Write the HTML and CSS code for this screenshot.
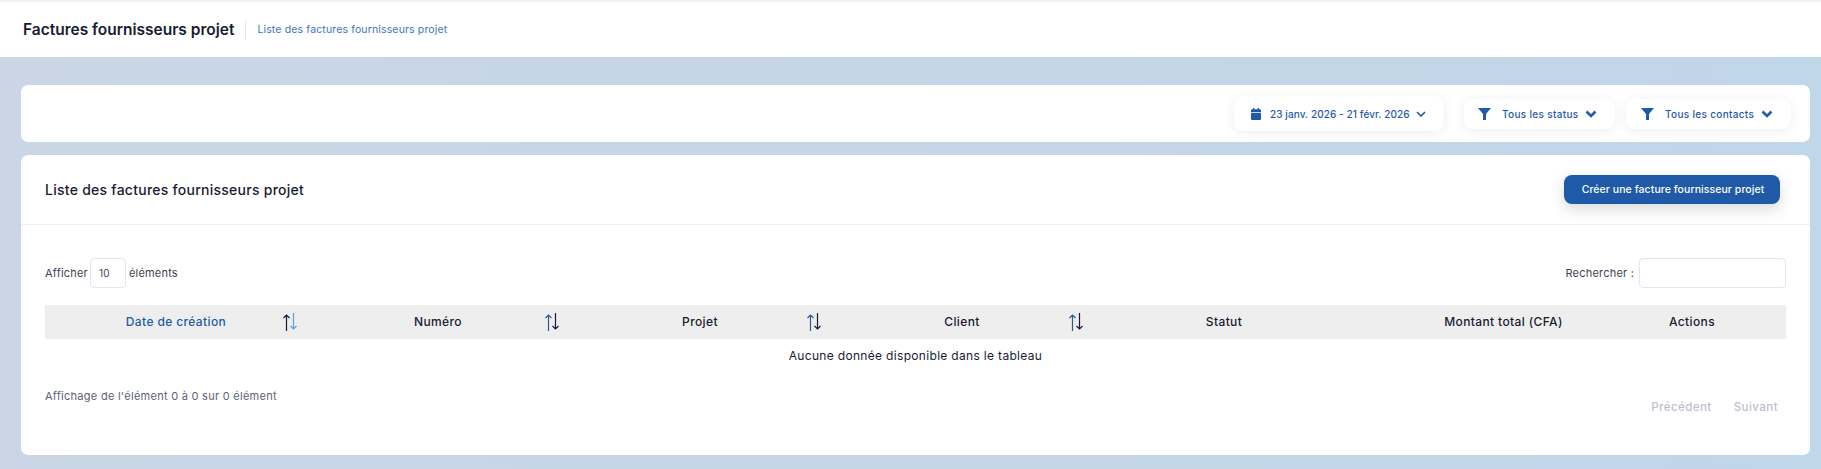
FILE: index.html
```html
<!DOCTYPE html>
<html lang="fr">
<head>
<meta charset="utf-8">
<title>Factures fournisseurs projet</title>
<link rel="stylesheet" href="styles.css">
</head>
<body>
<header class="topbar">
  <h1 class="page-title">Factures fournisseurs projet</h1>
  <span class="page-sub">Liste des factures fournisseurs projet</span>
</header>
<main class="content">
  <section class="card filters">
    <button class="pill pill-date">
      <svg class="ic-cal" viewBox="0 0 10 12"><path d="M2 0h1.3v1.3h3.4V0H8v1.3h1a1 1 0 0 1 1 1V4H0V2.3a1 1 0 0 1 1-1h1zM0 4.8h10V11a1 1 0 0 1-1 1H1a1 1 0 0 1-1-1z"/></svg>
      <span class="pill-label">23 janv. 2026 - 21 févr. 2026</span>
      <svg class="ic-chev-thin" viewBox="0 0 10 6"><path d="M1 1l4 4 4-4"/></svg>
    </button>
    <button class="pill pill-status">
      <svg class="ic-funnel" viewBox="0 0 13 12"><path d="M0 0h13L8 6v6H5V6z"/></svg>
      <span class="pill-label">Tous les status</span>
      <svg class="ic-chev" viewBox="0 0 12 8"><path d="M1.5 1.5l4.5 4.5 4.5-4.5"/></svg>
    </button>
    <button class="pill pill-contacts">
      <svg class="ic-funnel" viewBox="0 0 13 12"><path d="M0 0h13L8 6v6H5V6z"/></svg>
      <span class="pill-label">Tous les contacts</span>
      <svg class="ic-chev" viewBox="0 0 12 8"><path d="M1.5 1.5l4.5 4.5 4.5-4.5"/></svg>
    </button>
  </section>
  <section class="card list">
    <div class="list-head">
      <h2 class="list-title">Liste des factures fournisseurs projet</h2>
      <button class="btn-create">Créer une facture fournisseur projet</button>
    </div>
    <div class="list-body">
      <div class="tools">
        <label class="tool-length">Afficher <span class="length-box">10</span> éléments</label>
        <label class="tool-search">Rechercher : <input class="search-box" type="text"></label>
      </div>
      <table class="grid">
        <colgroup>
          <col class="c-std"><col class="c-std"><col class="c-std"><col class="c-std"><col class="c-std"><col class="c-amount"><col class="c-actions">
        </colgroup>
        <thead>
          <tr>
            <th class="sortable active"><span>Date de création</span>
              <svg class="sort" viewBox="0 0 16 18"><path class="up dark" d="M4.5 18V2M1.5 5l3-3 3 3"/><path class="down light" d="M11.5 0v16M8.5 13l3 3 3-3"/></svg></th>
            <th class="sortable"><span>Numéro</span>
              <svg class="sort" viewBox="0 0 16 18"><path class="up mid" d="M4.5 18V2M1.5 5l3-3 3 3"/><path class="down dark" d="M11.5 0v16M8.5 13l3 3 3-3"/></svg></th>
            <th class="sortable"><span>Projet</span>
              <svg class="sort" viewBox="0 0 16 18"><path class="up mid" d="M4.5 18V2M1.5 5l3-3 3 3"/><path class="down dark" d="M11.5 0v16M8.5 13l3 3 3-3"/></svg></th>
            <th class="sortable"><span>Client</span>
              <svg class="sort" viewBox="0 0 16 18"><path class="up mid" d="M4.5 18V2M1.5 5l3-3 3 3"/><path class="down dark" d="M11.5 0v16M8.5 13l3 3 3-3"/></svg></th>
            <th>Statut</th>
            <th>Montant total (CFA)</th>
            <th class="th-actions">Actions</th>
          </tr>
        </thead>
        <tbody>
          <tr><td class="empty" colspan="7">Aucune donnée disponible dans le tableau</td></tr>
        </tbody>
      </table>
      <div class="foot">
        <p class="info">Affichage de l'élément 0 à 0 sur 0 élément</p>
        <nav class="pager"><span>Précédent</span><span>Suivant</span></nav>
      </div>
    </div>
  </section>
</main>
</body>
</html>
```
FILE: styles.css
```css
* { box-sizing: border-box; }
html, body { margin: 0; height: 469px; overflow: hidden; }
body {
  font-family: Inter, "Noto Sans", sans-serif;
  color: #181c32;
  background: linear-gradient(90deg, #cad6e6, #c0d6e9);
  display: flex;
  flex-direction: column;
}
.topbar {
  height: 57px;
  flex: none;
  background: #fff;
  border-top: 2px solid #f1f2f6;
  display: flex;
  align-items: center;
  padding: 0 0 0 23px;
}
.page-title {
  margin: 0;
  font-size: 15.5px;
  font-weight: 600;
  line-height: 20px;
  color: #181c32;
}
.page-sub {
  margin-left: 11px;
  padding-left: 11px;
  border-left: 1px solid #e4e6ef;
  height: 20px;
  line-height: 20px;
  font-size: 10.5px;
  letter-spacing: .14px;
  color: #3f74bd;
}
.content {
  flex: 1;
  padding: 28px 11px 0 21px;
  display: flex;
  flex-direction: column;
  gap: 13px;
}
.card { background: #fff; border-radius: 7px; }
.filters {
  height: 57px;
  display: flex;
  align-items: center;
  justify-content: flex-end;
  padding-right: 19px;
}
.pill {
  border: 0;
  background: #fff;
  border-radius: 9px;
  box-shadow: 0 2px 12px rgba(60, 70, 90, .09);
  display: flex;
  align-items: center;
  font: 500 10px Inter, "Noto Sans", sans-serif;
  color: #1f5aa8;
  padding: 0;
}
.pill-date { width: 210px; height: 35px; padding-left: 17px; margin-right: 20px; letter-spacing: .09px; }
.pill-status { width: 151px; height: 30px; padding-left: 14px; margin-right: 11px; letter-spacing: .32px; }
.pill-contacts { width: 165px; height: 30px; padding-left: 15px; letter-spacing: .32px; }
.ic-cal { width: 10px; height: 12px; fill: #1f5aa8; flex: none; }
.ic-funnel { width: 13px; height: 12px; fill: #1f5aa8; flex: none; }
.ic-chev-thin { width: 10px; height: 6px; fill: none; stroke: #1f5aa8; stroke-width: 1.6; flex: none; margin-left: 6px; }
.ic-chev { width: 12px; height: 8px; fill: none; stroke: #1f5aa8; stroke-width: 2.6; flex: none; margin-left: 7px; }
.pill-date .pill-label { margin-left: 9px; }
.pill-status .pill-label, .pill-contacts .pill-label { margin-left: 11px; }
.list { height: 300px; }
.list-head {
  height: 70px;
  border-bottom: 1px solid #eff2f5;
  display: flex;
  align-items: center;
  justify-content: space-between;
  padding: 0 30px 0 24px;
}
.list-title { margin: 0; font-size: 14px; font-weight: 450; letter-spacing: .26px; color: #181c32; }
.btn-create {
  width: 216px;
  height: 29px;
  border: 0;
  border-radius: 8px;
  background: #1f5aa8;
  color: #fff;
  font: 500 10.5px Inter, "Noto Sans", sans-serif;
  letter-spacing: .07px;
  box-shadow: 0 5px 14px rgba(60, 70, 90, .2);
  padding: 0 0 0 2px;
}
.list-body { padding: 33px 24px 0; }
.tools {
  display: flex;
  justify-content: space-between;
  align-items: center;
  height: 30px;
  font-size: 11px;
  letter-spacing: .2px;
  color: #3f4254;
}
.tool-length, .tool-search { display: flex; align-items: center; }
.length-box {
  width: 36px;
  height: 30px;
  margin: 0 3px 0 2px;
  border: 1px solid #e4e6ef;
  border-radius: 4px;
  font-size: 10px;
  line-height: 28px;
  padding-left: 8px;
}
.search-box {
  width: 147px;
  height: 30px;
  margin-left: 5px;
  border: 1px solid #e4e6ef;
  border-radius: 4px;
  background: #fff;
}
.grid {
  width: 1741px;
  margin-top: 17px;
  border-collapse: collapse;
  table-layout: fixed;
}
.c-std { width: 262px; }
.c-amount { width: 297px; }
.c-actions { width: 134px; }
.grid thead tr { height: 34px; background: #eee; }
.grid th {
  position: relative;
  padding: 0 0 2px;
  font-size: 12px;
  font-weight: 450;
  letter-spacing: .38px;
  color: #181c32;
  text-align: center;
}
.th-actions { padding-right: 54px !important; }
.active > span { color: #1f5aa8; }
.sort {
  position: absolute;
  right: 9px;
  top: 8px;
  width: 16px;
  height: 18px;
  fill: none;
  stroke-width: 1.2;
}
.dark { stroke: #1c1c3a; }
.mid { stroke: #2b5a94; }
.light { stroke: #5aa3d8; }
.empty {
  height: 32px;
  padding: 0;
  text-align: center;
  font-size: 12px;
  letter-spacing: .32px;
  color: #181c32;
}
.foot {
  display: flex;
  justify-content: space-between;
  align-items: flex-start;
  padding-top: 17px;
}
.info { margin: 0; font-size: 11px; line-height: 16px; letter-spacing: .27px; color: #5e6278; }
.pager {
  display: flex;
  gap: 22px;
  padding: 11px 8px 0 0;
  font-size: 11.5px;
  line-height: 16px;
  font-weight: 500;
  letter-spacing: .45px;
  color: #bdbfce;
}
```
